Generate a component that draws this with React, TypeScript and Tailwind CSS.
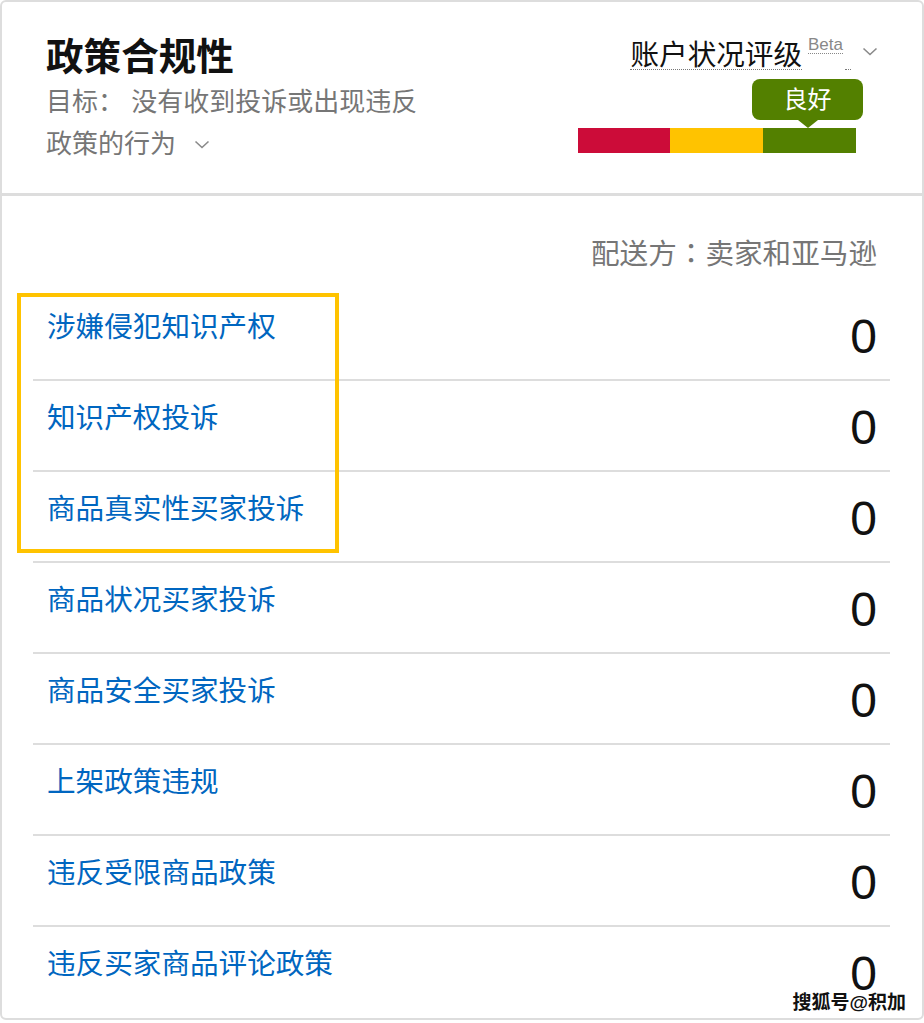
import React from "react";

const rows = [
  "涉嫌侵犯知识产权",
  "知识产权投诉",
  "商品真实性买家投诉",
  "商品状况买家投诉",
  "商品安全买家投诉",
  "上架政策违规",
  "违反受限商品政策",
  "违反买家商品评论政策",
];

function Chevron({ className }: { className?: string }) {
  return (
    <svg className={className} width="16" height="9" viewBox="0 0 16 9" fill="none">
      <polyline points="1.5,1.5 8,7.5 14.5,1.5" stroke="#8a8a8a" strokeWidth="1.6" />
    </svg>
  );
}

export default function App() {
  return (
    <div
      className="relative w-[924px] h-[1023px] overflow-hidden bg-white"
      style={{ fontFamily: '"Liberation Sans", "Noto Sans CJK SC", sans-serif' }}
    >
      <div className="border-2 border-[#dddddd] rounded-[6px]">
        {/* Header */}
        <div className="flex justify-between h-[194px] border-b-[3px] border-[#dddddd] pl-[44px] pr-[44px]">
          <div className="pt-[33px] w-[390px]">
            <h1 className="text-[37.6px] leading-[44px] font-bold text-[#111111]">政策合规性</h1>
            <p className="mt-[2px] text-[26px] leading-[42px] text-[#767676]">
              目标： 没有收到投诉或出现违反政策的行为
              <Chevron className="inline-block ml-[18px] align-[4px]" />
            </p>
          </div>

          <div className="pt-[39px] flex flex-col items-end">
            <div className="flex items-start">
              <span className="text-[28.6px] leading-[28px] text-[#111111] border-b border-dotted border-[#777777]">
                账户状况评级
              </span>
              <span className="ml-[6px] mt-[-5px] text-[17px] leading-[17px] text-[#888888] border-b border-dotted border-[#888888]">
                Beta
              </span>
              <span className="ml-[2px] w-[6px] h-[29px] border-b border-dotted border-[#777777]" />
              <Chevron className="ml-[11px] mt-[6px]" />
            </div>

            <div className="mt-[9px] mr-[22px] w-[278px] flex flex-col">
              <div className="flex justify-end">
                <div className="mr-[-7px] flex flex-col items-center">
                  <div className="w-[111px] h-[41px] rounded-[8px] bg-[#538000] text-white text-[24px] leading-none flex items-center justify-center">
                    良好
                  </div>
                  <div className="w-0 h-0 border-x-[10px] border-x-transparent border-t-[8px] border-t-[#538000]" />
                </div>
              </div>
              <div className="flex h-[25px]">
                <div className="w-[92px] bg-[#cc0c39]" />
                <div className="w-[93px] bg-[#ffc300]" />
                <div className="w-[93px] bg-[#538000]" />
              </div>
            </div>
          </div>
        </div>

        {/* Body */}
        <div className="pl-[31px] pr-[32px] pt-[40px]">
          <div className="h-[36px] text-right pr-[13px] text-[28.6px] leading-[36px] text-[#767676]">
            配送方
            <span className="leading-none" style={{ fontFamily: '"Noto Sans CJK TC", sans-serif' }}>：</span>
            卖家和亚马逊
          </div>
          <div className="relative mt-[18px]">
            <div className="absolute left-[-16px] top-[3px] w-[322px] h-[260px] border-4 border-[#ffc300]" />
            {rows.map((label) => (
              <div
                key={label}
                className="h-[91px] border-b-2 border-[#dddddd] last:border-b-0 flex justify-between items-start pl-[14px] pr-[13px]"
              >
                <a className="pt-[19px] text-[28.6px] leading-[36px] text-[#0066c0]">{label}</a>
                <span className="pt-[23px] text-[48px] leading-[48px] text-[#111111]">0</span>
              </div>
            ))}
          </div>
        </div>
      </div>

      <div className="absolute right-[18px] top-[991px] text-[19px] leading-[24px] font-bold text-[#111111] [text-shadow:0_0_2px_#ffffff,0_0_2px_#ffffff]">
        搜狐号@积加
      </div>
    </div>
  );
}
